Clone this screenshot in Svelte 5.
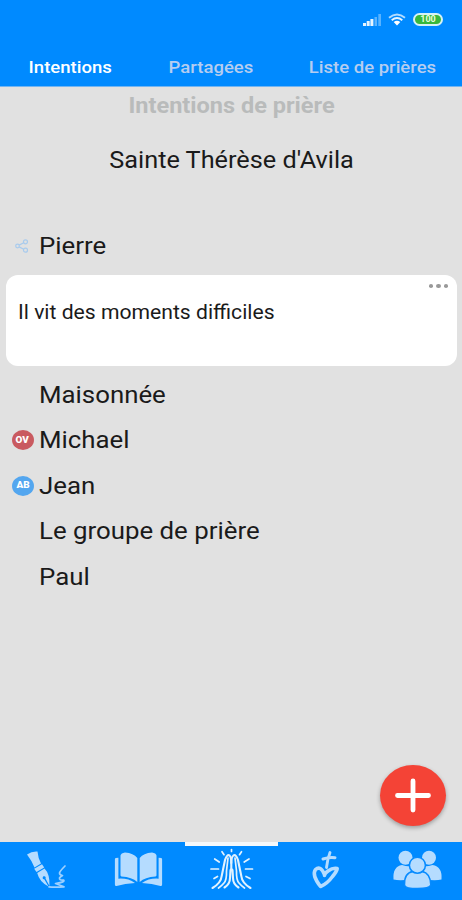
<script lang="ts">
	const tabs = ['Intentions', 'Partagées', 'Liste de prières'];

	const people = [
		{ name: 'Maisonnée' },
		{ name: 'Michael', initials: 'OV', color: 'red' },
		{ name: 'Jean', initials: 'AB', color: 'blue' },
		{ name: 'Le groupe de prière' },
		{ name: 'Paul' }
	];

	let activeTab = $state('Intentions');
</script>

<div class="app">
	<header>
		<div class="status">
			<svg class="signal" viewBox="0 0 18 12" width="18" height="12">
				<path d="M0 9h3v3H0zM3.700 7h3v5h-3zM7.400 5h3v7h-3z" fill="#fff" opacity=".9" />
				<path d="M11.500 3H14v9h-2.500zM15.300 0H18v12h-2.700z" fill="#fff" opacity=".35" />
			</svg>
			<svg class="wifi" viewBox="0 0 18 13" width="18" height="13">
				<g fill="none" stroke="#fff" stroke-width="1.900">
					<path d="M1 4.700Q9-1.900 17 4.700" opacity=".7" />
					<path d="M3.700 7.200Q9 2.900 14.300 7.200" opacity=".9" />
				</g>
				<path d="M5.700 9Q9 6.300 12.300 9L9 12.500z" fill="#fff" />
			</svg>
			<span class="battery">100</span>
		</div>
		<nav class="tabs">
			{#each tabs as tab}
				<button class:active={activeTab === tab} onclick={() => (activeTab = tab)}>{tab}</button>
			{/each}
		</nav>
	</header>

	<main>
		<h1>Intentions de prière</h1>
		<h2>Sainte Thérèse d'Avila</h2>

		<div class="row first">
			<span class="mark">
				<svg viewBox="0 0 14 14" width="14" height="14" fill="none" stroke="#a9cbed" stroke-width="1.200">
					<circle cx="2.500" cy="7" r="1.800" />
					<circle cx="10.500" cy="2.800" r="2" />
					<circle cx="10.500" cy="11.200" r="2" />
					<path d="M4.200 6.100l4.500-2.300M4.200 7.900l4.500 2.300" />
				</svg>
			</span>
			<span class="name">Pierre</span>
		</div>

		<article class="card">
			<p>Il vit des moments difficiles</p>
			<button class="more" aria-label="Options"><i></i><i></i><i></i></button>
		</article>

		{#each people as person}
			<div class="row">
				<span class="mark">
					{#if person.initials}
						<span class="avatar {person.color}"><b>{person.initials}</b></span>
					{/if}
				</span>
				<span class="name">{person.name}</span>
			</div>
		{/each}
	</main>

	<button class="add" aria-label="Ajouter">
		<svg viewBox="0 0 66 61" width="66" height="61">
			<path d="M33 16V45M17.500 30.500H48.500" stroke="#fff" stroke-width="4.800" stroke-linecap="round" />
		</svg>
	</button>

	<nav class="bottom">
		<button aria-label="Écrire">
			<svg viewBox="0 0 92 58">
				<g fill="#b5dcff">
					<path d="M27 12.500Q32 9 37.500 9.500Q38 16 41 21.500L34.500 25.500Q32 19 27 12.500z" />
					<path d="M34.200 26.800L42 22.300L44.200 25.500L36.500 30z" />
					<path d="M37.200 31L44.500 26.500Q50 32 49.500 44L45.500 36.500a1.500 1.500 0 1 0-1.200.8L48.500 44.500Q39.500 40 37.200 31z" />
				</g>
				<path d="M49 44.800Q54 45.300 64 44.800L55.500 41.500Q66 40 63.500 38Q59 38.500 59.500 36Q60 35 62.500 33.500Q59.500 33 59.500 31Q60 29 65 24" fill="none" stroke="#9dd0ff" stroke-width="1.700" stroke-linejoin="round" stroke-linecap="round" />
			</svg>
		</button>
		<button aria-label="Lire">
			<svg viewBox="0 0 92 58">
				<path d="M28.500 13.500Q29 11 33 10.500Q41.500 11.200 45.300 16V40Q40 35.200 29.500 34.500Q28.500 34.300 28.500 33.200zM64.500 13.500Q64 11 60 10.500Q51.500 11.200 47.700 16V40Q53 35.200 63.500 34.500Q64.500 34.300 64.500 33.200z" fill="#b5dcff" />
				<path d="M22.900 17.200Q22.900 15.800 26.400 15.800V36.700Q36 36 43 41Q33 41.500 24.500 44Q22.900 44.200 22.900 42.500zM70.100 17.200Q70.100 15.800 66.600 15.800V36.700Q57 36 50 41Q60 41.500 68.500 44Q70.100 44.200 70.100 42.500z" fill="#b5dcff" />
			</svg>
		</button>
		<button class="current" aria-label="Prier">
			<svg viewBox="0 0 92 58" fill="none" stroke="#e2f2ff" stroke-width="2.100" stroke-linecap="round" stroke-linejoin="round">
				<path d="M27.500 46Q36 41 36.700 34L40 18Q42 12 44.500 13.500Q46.300 15 46.300 21V28" />
				<path d="M65.500 46Q57 41 56.300 34L53 18Q51 12 48.500 13.500Q46.300 15 46.300 21" />
				<path d="M44.300 46V34M48.500 46V34" opacity="0" />
				<path d="M39.500 45.500Q45 42 45 36L45.500 28Q46.500 26.500 47.500 28L48 36Q48 42 53.500 45.500" />
				<path d="M43 16L41.500 29Q41.800 38 39 41Q37 43.500 33.500 46M50 16L51.500 29Q51.200 38 54 41Q56 43.500 59.500 46" stroke-width="1.700" />
				<path d="M46.500 7.500v2M37 9.700l2 3M56.500 9.700l-2 3M29.700 17l4.500 3M64 17l-4.800 3M26 27h7.500M60.500 27h7M29 36.500l3.500-2M65 36.500l-4-2" stroke-width="1.700" />
			</svg>
		</button>
		<button aria-label="Aimer">
			<svg viewBox="0 0 92 58" fill="none" stroke="#b5dcff" stroke-linecap="round" stroke-linejoin="round">
				<path d="M53 10.500Q50.500 17 49.500 25.500" stroke-width="2.900" />
				<path d="M46 17Q52 15 58 15.700" stroke-width="3" />
				<path d="M47.500 32.500Q43.500 23 38.500 27.500Q34.500 33 43.500 44.500Q50 42 55.500 34.500Q60 29 60.200 26.500Q56 25.500 51 29Q47.500 31.500 47.500 33.500" stroke-width="3.600" />
			</svg>
		</button>
		<button aria-label="Groupe">
			<svg viewBox="0 0 92 58" fill="#b5dcff">
				<circle cx="35.500" cy="15.700" r="7" />
				<circle cx="59" cy="15.700" r="7" />
				<path d="M23.500 37.500Q22.500 24.500 32 23Q38 25 40.500 24L43 28.500Q36 30.500 35 38Q28 38.500 23.500 37.500zM71.500 37.500Q72.500 24.500 62.500 23Q56.500 25 54 24L51.500 28.500Q58.500 30.500 60 38Q67 38.500 71.500 37.500z" />
				<g stroke="#078bff" stroke-width="1.500">
					<path d="M34.500 43Q34 31 43 29.500Q47.500 31.500 52 29.500Q60.500 31 60.800 43Q60 46.500 47.500 46.500Q35 46.500 34.500 43z" />
					<circle cx="47.400" cy="23.200" r="8" />
				</g>
			</svg>
		</button>
	</nav>
</div>

<style>
	:global(body) {
		margin: 0;
	}

	.app {
		position: relative;
		display: flex;
		flex-direction: column;
		width: 462px;
		height: 900px;
		overflow: hidden;
		background: #e1e1e1;
		color: #1a1a1a;
		font-family: Roboto, 'Liberation Sans', sans-serif;
	}

	button {
		padding: 0;
		border: 0;
		background: none;
		font: inherit;
		color: inherit;
	}

	svg {
		display: block;
	}

	header {
		display: flex;
		flex-direction: column;
		box-sizing: border-box;
		height: 87px;
		background: #008aff;
		border-bottom: 1px solid #72b5f2;
	}

	.status {
		display: flex;
		align-items: center;
		justify-content: flex-end;
		height: 39px;
		padding-right: 19px;
	}

	.wifi {
		margin: 0 7px 0 7px;
	}

	.battery {
		box-sizing: border-box;
		width: 30px;
		height: 13px;
		border: 2px solid #d5f2f5;
		border-radius: 7px;
		background: #37b83d;
		color: #eaffd9;
		font-size: 9px;
		font-weight: 700;
		line-height: 9px;
		text-align: center;
	}

	.tabs {
		display: flex;
		align-items: center;
		justify-content: space-between;
		height: 47px;
		padding: 8px 31px 0 32px;
		box-sizing: border-box;
		font-size: 17px;
		font-weight: 500;
		color: #b6cdf0;
	}

	.tabs button {
		transform: scaleX(1.09);
	}

	.tabs .active {
		color: #fff;
	}

	main {
		flex: 1;
	}

	h1,
	h2 {
		margin: 0;
		text-align: center;
		transform: scaleX(1.09);
	}

	h1 {
		padding: 5px 0 0 1px;
		font-size: 21.600px;
		line-height: 27px;
		font-weight: 700;
		color: #b9bbbb;
	}

	h2 {
		padding: 26px 0 0 1px;
		font-size: 23.200px;
		line-height: 30px;
		font-weight: 400;
	}

	.row {
		display: flex;
		align-items: center;
		height: 45.400px;
	}

	.row.first {
		margin-top: 48px;
	}

	.mark {
		display: flex;
		justify-content: center;
		width: 28px;
		padding-left: 8.500px;
		margin-right: 2.500px;
	}

	.row.first .mark {
		padding-left: 8px;
		margin-right: 3px;
	}

	.name {
		font-size: 23.700px;
		transform: scaleX(1.09);
		transform-origin: left;
	}

	.avatar {
		display: flex;
		align-items: center;
		justify-content: center;
		flex: none;
		width: 22px;
		height: 20px;
		border-radius: 50%;
		color: #fff;
		font-size: 9px;
		line-height: 1;
	}

	.avatar b {
		font-weight: 900;
		transform: scaleX(1.1);
	}

	.avatar.red {
		background: #c95a60;
	}

	.avatar.blue {
		background: #53a6ef;
	}

	.card {
		position: relative;
		box-sizing: border-box;
		height: 91px;
		margin: 7px 5px 6px 6px;
		padding: 23.500px 12px 0;
		border-radius: 12px;
		background: #fff;
	}

	.card p {
		margin: 0;
		font-size: 19.400px;
		line-height: 27px;
		transform: scaleX(1.09);
		transform-origin: left;
	}

	.more {
		position: absolute;
		top: 9px;
		right: 9px;
		display: flex;
		gap: 3px;
	}

	.more i {
		width: 4.500px;
		height: 4px;
		border-radius: 50%;
		background: #999;
	}

	.add {
		position: absolute;
		right: 16px;
		bottom: 74px;
		width: 66px;
		height: 61px;
		border-radius: 50%;
		background: #f44336;
		box-shadow: 0 2px 4px rgba(0, 0, 0, 0.3);
	}

	.bottom {
		display: flex;
		height: 58px;
		background: #008aff;
	}

	.bottom button {
		position: relative;
		flex: 1;
	}

	.bottom svg {
		width: 92px;
		height: 58px;
	}

	.bottom .current::before {
		content: '';
		position: absolute;
		top: 0;
		left: 0;
		width: 93px;
		height: 4px;
		background: #f4f8fb;
	}
</style>
